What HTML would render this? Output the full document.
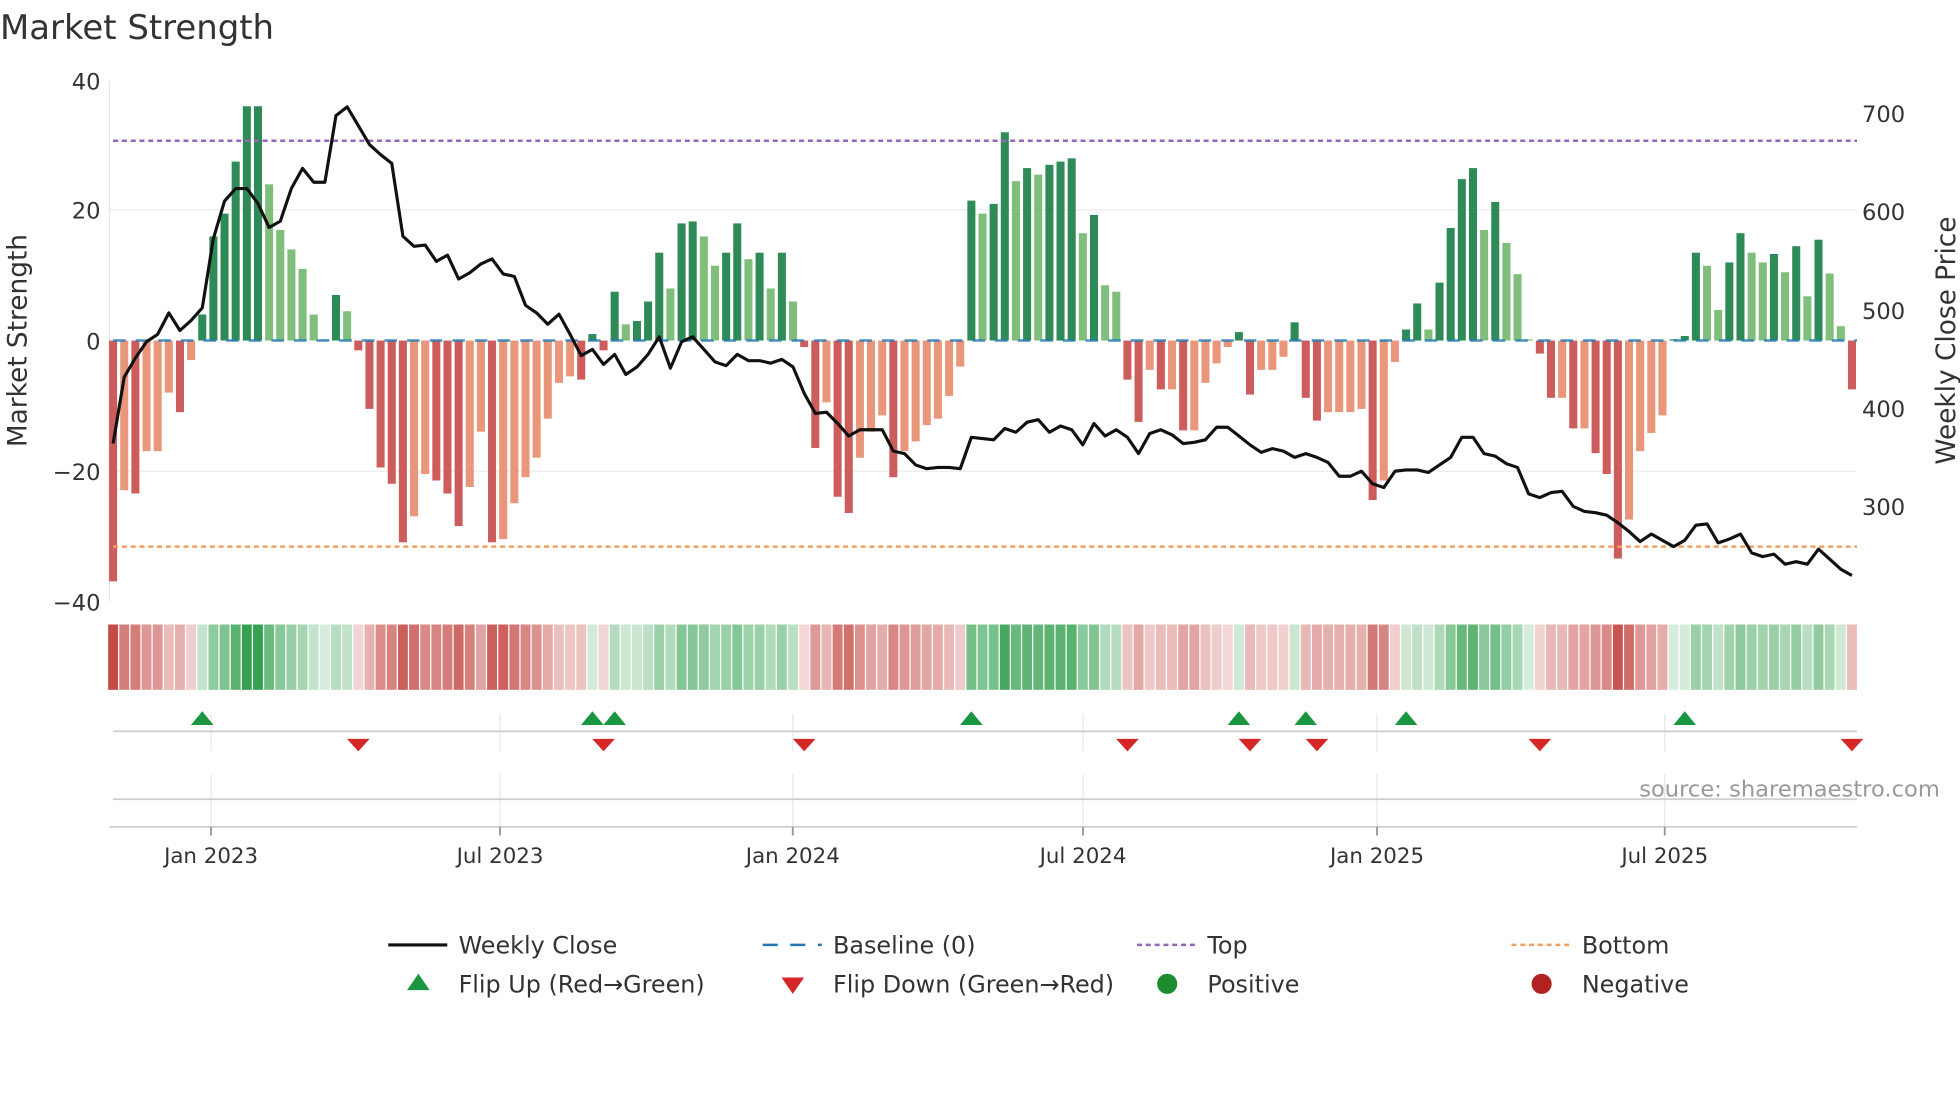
<!DOCTYPE html>
<html><head><meta charset="utf-8"><style>
html,body{margin:0;padding:0;background:#fff}
svg{display:block;font-family:"DejaVu Sans","Liberation Sans",sans-serif}
</style></head><body>
<svg id="s" width="1960" height="1102" viewBox="0 0 1560 877" xmlns="http://www.w3.org/2000/svg">
<text x="0" y="31" font-size="27" fill="#333">Market Strength</text>
<g stroke="#ececec" stroke-width="1">
<line x1="87" y1="167" x2="1478" y2="167"/><line x1="87" y1="375" x2="1478" y2="375"/>
</g>
<line x1="87" y1="64" x2="87" y2="479" stroke="#e6e6e6"/>
<g font-size="18" fill="#333" text-anchor="end">
<text x="80" y="71">40</text><text x="80" y="174">20</text><text x="80" y="278">0</text><text x="80" y="382">−20</text><text x="80" y="486">−40</text>
</g>
<g font-size="18" fill="#333">
<text x="1482" y="97">700</text><text x="1482" y="175">600</text><text x="1482" y="254">500</text><text x="1482" y="332">400</text><text x="1482" y="410">300</text>
</g>
<text transform="translate(21,271) rotate(-90)" font-size="21" fill="#333" text-anchor="middle">Market Strength</text>
<text transform="translate(1556,271) rotate(-90)" font-size="21" fill="#333" text-anchor="middle">Weekly Close Price</text>
<g id="bars"></g>
<line x1="90" y1="271" x2="1478" y2="271" stroke="#1f77b4" stroke-width="2" stroke-dasharray="10,8" opacity="0.8"/>
<line x1="90" y1="112" x2="1478" y2="112" stroke="#9467bd" stroke-width="2" stroke-dasharray="4,3"/>
<line x1="90" y1="435" x2="1478" y2="435" stroke="#f0a060" stroke-width="2" stroke-dasharray="4,3"/>
<polyline id="price" fill="none" stroke="#111" stroke-width="2.5" stroke-linejoin="round"/>
<g id="heat"></g>
<g stroke="#e8e8e8" stroke-width="1">
<line x1="168" y1="568" x2="168" y2="598"/><line x1="398" y1="568" x2="398" y2="598"/><line x1="631" y1="568" x2="631" y2="598"/><line x1="862" y1="568" x2="862" y2="598"/><line x1="1096" y1="568" x2="1096" y2="598"/><line x1="1325" y1="568" x2="1325" y2="598"/>
<line x1="168" y1="616" x2="168" y2="658"/><line x1="398" y1="616" x2="398" y2="658"/><line x1="631" y1="616" x2="631" y2="658"/><line x1="862" y1="616" x2="862" y2="658"/><line x1="1096" y1="616" x2="1096" y2="658"/><line x1="1325" y1="616" x2="1325" y2="658"/>
</g>
<line x1="90" y1="582" x2="1478" y2="582" stroke="#d0d0d0" stroke-width="1.5"/>
<line x1="90" y1="636" x2="1478" y2="636" stroke="#d0d0d0" stroke-width="1.5"/>
<line x1="87" y1="658" x2="1478" y2="658" stroke="#d0d0d0" stroke-width="1.5"/>
<g id="marks"></g>
<g stroke="#999" stroke-width="1.5"><line x1="168" y1="658" x2="168" y2="665"/><line x1="398" y1="658" x2="398" y2="665"/><line x1="631" y1="658" x2="631" y2="665"/><line x1="862" y1="658" x2="862" y2="665"/><line x1="1096" y1="658" x2="1096" y2="665"/><line x1="1325" y1="658" x2="1325" y2="665"/></g>
<g font-size="17" fill="#333" text-anchor="middle">
<text x="168" y="687">Jan 2023</text><text x="398" y="687">Jul 2023</text><text x="631" y="687">Jan 2024</text><text x="862" y="687">Jul 2024</text><text x="1096" y="687">Jan 2025</text><text x="1325" y="687">Jul 2025</text>
</g>
<text x="1544" y="634" font-size="18" fill="#999" text-anchor="end">source: sharemaestro.com</text>
<g font-size="19" fill="#333">
<line x1="309" y1="752" x2="356" y2="752" stroke="#111" stroke-width="2.5"/><text x="365" y="759">Weekly Close</text>
<line x1="607" y1="752" x2="654" y2="752" stroke="#1f77b4" stroke-width="2" stroke-dasharray="12,10"/><text x="663" y="759">Baseline (0)</text>
<line x1="905" y1="752" x2="952" y2="752" stroke="#9467bd" stroke-width="2" stroke-dasharray="4,3"/><text x="961" y="759">Top</text>
<line x1="1203" y1="752" x2="1250" y2="752" stroke="#f0a060" stroke-width="2" stroke-dasharray="4,3"/><text x="1259" y="759">Bottom</text>
<polygon points="324,788 342,788 333,775" fill="#1a9641"/><text x="365" y="790">Flip Up (Red→Green)</text>
<polygon points="622,778 640,778 631,791" fill="#d62728"/><text x="663" y="790">Flip Down (Green→Red)</text>
<circle cx="929" cy="783" r="8" fill="#1e8c2e"/><text x="961" y="790">Positive</text>
<circle cx="1227" cy="783" r="8" fill="#b22222"/><text x="1259" y="790">Negative</text>
</g>
</svg>
<script>
var v=[-37,-23,-23.5,-17,-17,-8,-11,-3,4,16,19.5,27.5,36,36,24,17,14,11,4,0,7,4.5,-1.5,-10.5,-19.5,-22,-31,-27,-20.5,-21.5,-23.5,-28.5,-22.5,-14,-31,-30.5,-25,-21,-18,-12,-6.5,-5.5,-6,1,-1.5,7.5,2.5,3,6,13.5,8,18,18.3,16,11.5,13.5,18,12.5,13.5,8,13.5,6,-1,-16.5,-9.5,-24,-26.5,-18,-14,-11.5,-21,-17,-15.5,-13,-12,-8.5,-4,21.5,19.5,21,32,24.5,26.5,25.5,27,27.5,28,16.5,19.3,8.5,7.5,-6,-12.5,-4.5,-7.5,-7.5,-13.8,-13.8,-6.5,-3.5,-1,1.3,-8.3,-4.5,-4.5,-2.5,2.8,-8.8,-12.3,-11,-11,-11,-10.5,-24.5,-21.5,-3.3,1.7,5.7,1.7,8.9,17.3,24.8,26.5,17,21.3,15,10.2,0,-2,-8.8,-8.8,-13.5,-13.5,-17.3,-20.5,-33.5,-27.5,-17,-14.2,-11.5,0,0.7,13.5,11.5,4.7,12,16.5,13.5,12,13.3,10.5,14.5,6.8,15.5,10.3,2.2,-7.5];
var py=[353,300,285,272,266,249,263,255,245,190,160,150,150,162,181,176,150,134,145,145,92,85,100,115,123,130,188,196,195,208,203,222,217,210,206,218,220,243,249,258,250,266,283,278,290,282,298,292,282,268,293,272,268,278,288,291,282,287,287,289,286,292,313,329,328,337,347,342,342,342,359,361,370,373,372,372,373,348,349,350,341,344,336,334,344,339,342,354,337,347,342,348,361,345,342,346,353,352,350,340,340,347,354,360,357,359,364,361,364,368,379,379,375,385,388,375,374,374,376,370,364,348,348,361,363,369,372,393,396,392,391,403,407,408,410,416,423,431,425,430,435,430,418,417,432,429,425,440,443,441,449,447,449,437,445,453,458];
var n=v.length,x0=90,dx=(1474-90)/(n-1),bw=6.4,z=271,k=5.18;
var ns="http://www.w3.org/2000/svg",B=document.getElementById('bars'),H=document.getElementById('heat');
function r(g,a){var e=document.createElementNS(ns,'rect');for(var q in a)e.setAttribute(q,a[q]);g.appendChild(e);}
for(var i=0;i<n;i++){var x=x0+i*dx,val=v[i],p=i?v[i-1]:val,c;
if(val>=0){c=(val>=p)?'#2e8b57':'#7fbf7b';}else{c=(val<p||i==0)?'#cd5c5c':'#e9967a';}
var h=Math.abs(val)*k;if(h<1)h=1;
r(B,{x:x-bw/2,y:val>=0?z-h:z,width:bw,height:h,fill:c});
var t=Math.min(1,Math.abs(val)/36),col;
if(val>=0){col='rgba(30,150,60,'+(0.18+0.72*t)+')';}else{col='rgba(190,55,50,'+(0.18+0.72*t)+')';}
r(H,{x:x-dx/2+0.5,y:497,width:dx-1,height:52,fill:col});}
var pts=[];for(var i=0;i<py.length;i++)pts.push((x0+i*dx).toFixed(1)+','+py[i]);
document.getElementById('price').setAttribute('points',pts.join(' '));
var M=document.getElementById('marks'),up=[8,43,45,77,101,107,116,141],dn=[22,44,62,91,102,108,128,156];
function tri(x,u){var e=document.createElementNS(ns,'polygon');
e.setAttribute('points',u?(x-9)+',577 '+(x+9)+',577 '+x+',566':(x-9)+',588 '+(x+9)+',588 '+x+',598');
e.setAttribute('fill',u?'#1a9641':'#d62728');M.appendChild(e);}
up.forEach(function(i){tri(x0+i*dx,1)});dn.forEach(function(i){tri(x0+i*dx,0)});
</script>
</body></html>
